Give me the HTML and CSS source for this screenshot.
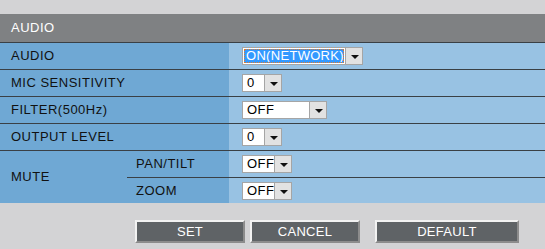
FILE: index.html
```html
<!DOCTYPE html>
<html lang="en">
<head>
    <meta charset="UTF-8">
    <title>AUDIO</title>
    <link rel="stylesheet" href="styles.css">
</head>
<body>
    <div class="top-bar"></div>

    <table class="settings">
        <tr>
            <td class="title" colspan="3">AUDIO</td>
        </tr>
        <tr>
            <td class="label" colspan="2">AUDIO</td>
            <td class="value">
                <span class="select focused w-audio"><span class="sel-text">ON(NETWORK)</span><span class="sel-arrow"></span></span>
            </td>
        </tr>
        <tr>
            <td class="label" colspan="2">MIC SENSITIVITY</td>
            <td class="value">
                <span class="select w-num"><span class="sel-text">0</span><span class="sel-arrow"></span></span>
            </td>
        </tr>
        <tr>
            <td class="label" colspan="2">FILTER(500Hz)</td>
            <td class="value">
                <span class="select w-filter"><span class="sel-text">OFF</span><span class="sel-arrow"></span></span>
            </td>
        </tr>
        <tr>
            <td class="label" colspan="2">OUTPUT LEVEL</td>
            <td class="value">
                <span class="select w-num"><span class="sel-text">0</span><span class="sel-arrow"></span></span>
            </td>
        </tr>
        <tr>
            <td class="label mute" rowspan="2">MUTE</td>
            <td class="label sub">PAN/TILT</td>
            <td class="value">
                <span class="select w-off"><span class="sel-text">OFF</span><span class="sel-arrow"></span></span>
            </td>
        </tr>
        <tr class="last">
            <td class="label sub">ZOOM</td>
            <td class="value">
                <span class="select w-off"><span class="sel-text">OFF</span><span class="sel-arrow"></span></span>
            </td>
        </tr>
    </table>

    <div class="buttons">
        <button class="btn btn-set">SET</button>
        <button class="btn btn-cancel">CANCEL</button>
        <button class="btn btn-default">DEFAULT</button>
    </div>
</body>
</html>
```

FILE: styles.css
```css
* {
    margin: 0;
    padding: 0;
    box-sizing: border-box;
    font-family: 'Liberation Sans', Arial, sans-serif;
}

body {
    background-color: #d3d3d5;
    width: 545px;
    height: 249px;
    overflow: hidden;
}

.top-bar {
    height: 14px;
}

.settings {
    width: 545px;
    border-collapse: collapse;
    font-size: 13px;
    letter-spacing: 0.5px;
    color: #111;
}

.settings td {
    height: 27px;
    border-bottom: 1px solid #3a4045;
    padding: 0;
}

.settings .title {
    background-color: #7f8183;
    color: #fff;
    padding-left: 11px;
    height: 28px;
}

.settings .label {
    background-color: #6fa8d4;
    padding-left: 11px;
    width: 229px;
}

.settings .mute {
    width: 127px;
}

.settings .sub {
    width: 102px;
    padding-left: 9px;
}

.settings .value {
    background-color: #98c2e3;
    padding-left: 13px;
    padding-top: 1px;
}

.settings tr.last td,
.settings .mute {
    border-bottom: none;
}

.settings tr.last td {
    height: 26px;
}

/* fake dropdowns */
.select {
    display: inline-flex;
    height: 18px;
    border: 1px solid #a5a5a5;
    background: #fff;
    vertical-align: middle;
}

.sel-text {
    flex: 1;
    line-height: 16px;
    padding-left: 4px;
    color: #000;
    white-space: nowrap;
    overflow: hidden;
}

.sel-arrow {
    width: 17px;
    height: 16px;
    background: #e2e2e2;
    border-left: 1px solid #a5a5a5;
    position: relative;
}

.sel-arrow::after {
    content: '';
    position: absolute;
    left: 5px;
    top: 7px;
    border-left: 4px solid transparent;
    border-right: 4px solid transparent;
    border-top: 4px solid #111;
}

.select.focused .sel-text {
    background: #3399ff;
    color: #fff;
    margin: 1px;
    padding-left: 1px;
    line-height: 12px;
    border: 1px dotted #e07a2a;
    letter-spacing: 0.3px;
}

.w-audio { width: 121px; }
.w-num { width: 40px; }
.w-filter { width: 85px; }
.w-off { width: 50px; }

.buttons {
    display: flex;
    padding: 17px 0 0 135px;
    gap: 5px;
}

.btn {
    height: 23px;
    width: 110px;
    background-color: #5f6366;
    color: #fff;
    font-size: 13px;
    letter-spacing: 0.3px;
    border: 2px solid;
    border-color: #f2f2f2 #8c8c8c #8c8c8c #f2f2f2;
    cursor: pointer;
}

.btn-default {
    width: 144px;
    margin-left: 10px;
}
```
